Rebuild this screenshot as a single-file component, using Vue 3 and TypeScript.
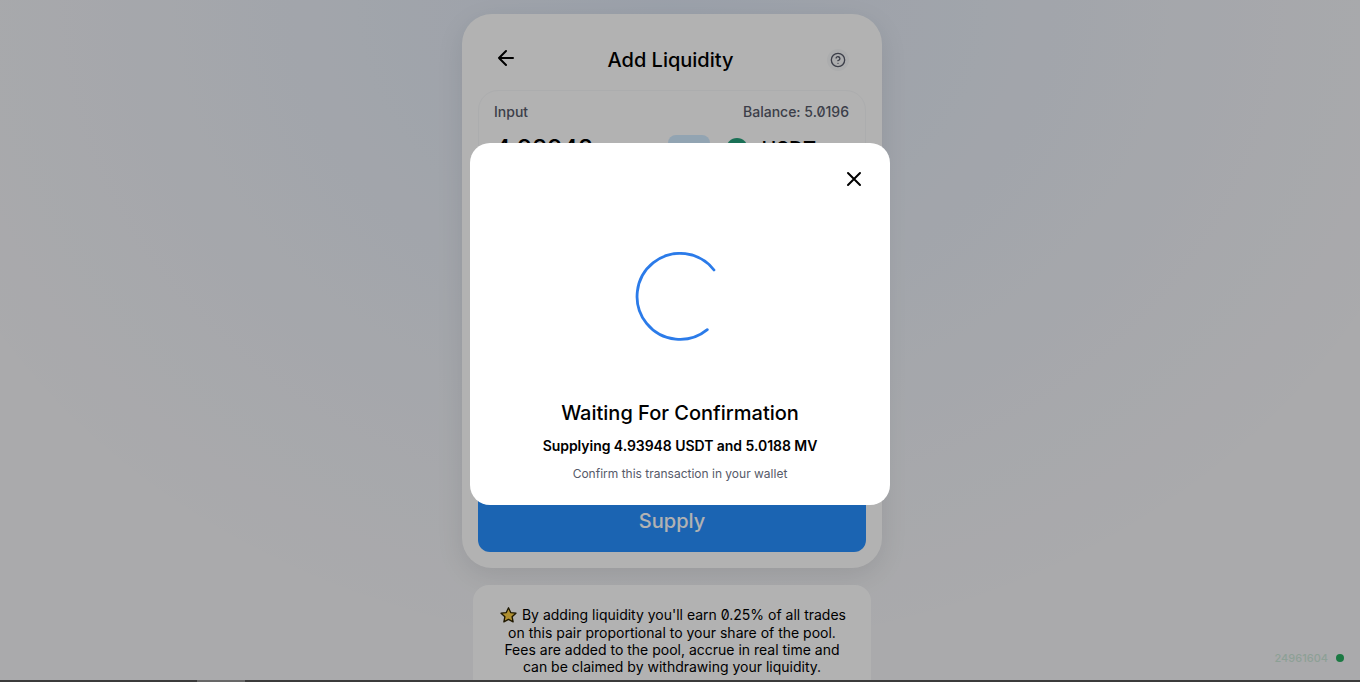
<template>
  <div class="page">
    <main class="column">
      <section class="card">
        <header class="card-head">
          <button class="icon-btn back" aria-label="Back">
            <svg width="24" height="24" viewBox="0 0 24 24" fill="none" stroke="currentColor" stroke-width="2" stroke-linecap="round" stroke-linejoin="round">
              <path d="M19 12H5M12 19l-7-7 7-7" />
            </svg>
          </button>
          <h1 class="card-title">Add Liquidity</h1>
          <button class="help" aria-label="Help">
            <svg width="16" height="16" viewBox="0 0 24 24" fill="none" stroke="currentColor" stroke-width="2" stroke-linecap="round" stroke-linejoin="round">
              <circle cx="12" cy="12" r="10" />
              <path d="M9.1 9a3 3 0 0 1 5.8 1c0 2-3 3-3 3M12 17h.01" />
            </svg>
          </button>
        </header>

        <div class="input-panel">
          <div class="input-labels">
            <span>Input</span>
            <span>Balance: 5.0196</span>
          </div>
          <div class="input-row">
            <span class="amount">4.93948</span>
            <button class="max">MAX</button>
            <span class="coin"></span>
            <span class="symbol">USDT</span>
          </div>
        </div>

        <button class="supply">Supply</button>
      </section>

      <aside class="notice">
        <p>
          <span class="star">
            <svg width="17" height="16" viewBox="1 1.5 22 21">
              <path d="M12 2.5l2.9 6.3 6.9.8-5.1 4.7 1.4 6.8-6.1-3.4-6.1 3.4 1.4-6.8-5.1-4.7 6.9-.8z" fill="#fdcf45" stroke="#2b2100" stroke-width="1.7" stroke-linejoin="round" />
            </svg>
          </span>
          By adding liquidity you'll earn 0.25% of all trades on this pair proportional to your share of the pool. Fees are added to the pool, accrue in real time and can be claimed by withdrawing your liquidity.
        </p>
      </aside>
    </main>

    <div class="status">
      <span class="block-no">{{ blockNumber }}</span>
      <span class="dot"></span>
    </div>

    <div class="overlay">
      <div class="modal">
        <button class="close" aria-label="Close">
          <svg width="24" height="24" viewBox="0 0 24 24" fill="none" stroke="currentColor" stroke-width="2" stroke-linecap="round" stroke-linejoin="round">
            <path d="M18 6L6 18M6 6l12 12" />
          </svg>
        </button>
        <div class="spinner">
          <svg width="90" height="90" viewBox="0 0 90 90" fill="none">
            <path d="M79 18A43 43 0 1 0 72.3 77.7" stroke="#2b7be9" stroke-width="2.8" stroke-linecap="round" />
          </svg>
        </div>
        <h2 class="modal-title">Waiting For Confirmation</h2>
        <p class="modal-sub">Supplying 4.93948 USDT and 5.0188 MV</p>
        <p class="modal-hint">Confirm this transaction in your wallet</p>
      </div>
    </div>

    <div class="scrollbar"><span class="thumb"></span></div>
  </div>
</template>

<script setup lang="ts">
const blockNumber = 24961604
</script>

<style>
html, body { margin: 0; height: 100%; overflow: hidden; }
</style>

<style scoped>
.page {
  position: relative;
  height: 682px;
  overflow: hidden;
  font-family: Inter, "Liberation Sans", sans-serif;
  font-feature-settings: "zero" 1;
  color: #000;
  background:
    radial-gradient(ellipse 800px 660px at 672px 0, rgba(33, 114, 229, 0.1) 0%, rgba(33, 114, 229, 0) 100%),
    #f4f4f6;
}

.column {
  display: flex;
  flex-direction: column;
  align-items: center;
  padding: 14px 16px 0 0;
}

.card {
  width: 420px;
  height: 554px;
  box-sizing: border-box;
  padding: 0 16px 16px;
  display: flex;
  flex-direction: column;
  background: #fff;
  border-radius: 30px;
  box-shadow: 0 8px 28px rgba(0, 0, 0, 0.09);
}

.card-head {
  height: 76px;
  display: flex;
  align-items: center;
  justify-content: space-between;
  padding: 16px 17px 0 16px;
  box-sizing: border-box;
}

.icon-btn, .help {
  border: none;
  background: none;
  padding: 0;
  display: flex;
  color: #000;
}

.back { margin-top: -4px; }

.card-title {
  margin: 0 4px 0 0;
  font-size: 20px;
  font-weight: 500;
}

.help {
  width: 22px;
  height: 22px;
  align-items: center;
  justify-content: center;
  border-radius: 50%;
  background: #f7f8fa;
  color: #565a69;
}

.input-panel {
  height: 120px;
  box-sizing: border-box;
  padding: 12px 16px 12px 15px;
  border: 1px solid #f7f8fa;
  border-radius: 20px;
}

.input-labels {
  display: flex;
  justify-content: space-between;
  font-size: 14px;
  font-weight: 500;
  color: #565a69;
}

.input-row {
  display: flex;
  align-items: center;
  margin-top: 14px;
}

.amount {
  font-size: 24px;
  font-weight: 500;
  margin: 0 auto 0 1px;
}

.max {
  width: 42px;
  height: 28px;
  border: none;
  border-radius: 8px;
  background: #d2ebff;
  color: #2172e5;
  font: inherit;
  font-size: 12px;
  margin-right: 16px;
}

.coin {
  width: 22px;
  height: 22px;
  border-radius: 50%;
  background: #26a17b;
  margin-right: 13px;
}

.symbol {
  font-size: 20px;
  font-weight: 500;
  margin-right: 33px;
}

.supply {
  margin-top: auto;
  height: 62px;
  border: none;
  border-radius: 12px;
  background: #2890ff;
  color: #fff;
  font: inherit;
  font-size: 20px;
  font-weight: 500;
}

.notice {
  margin-top: 17px;
  width: 398px;
  box-sizing: border-box;
  padding: 21.3px 24px 20px;
  background: #fff;
  border-radius: 16px;
}

.notice p {
  margin: 0;
  font-size: 14px;
  line-height: 17.3px;
  text-align: center;
}

.star {
  display: inline-block;
  height: 14px;
  line-height: 14px;
  vertical-align: -2px;
  margin: 0 1px 0 2px;
}

.star svg { display: block; margin-top: -1px; }

.status {
  position: absolute;
  right: 16px;
  bottom: 17px;
  display: flex;
  align-items: center;
  gap: 8px;
  font-size: 11px;
  font-weight: 500;
}

.block-no { color: #27ae60; opacity: 0.2; font-feature-settings: "zero" 0; }

.dot {
  width: 8px;
  height: 8px;
  border-radius: 50%;
  background: #27ae60;
}

.overlay {
  position: absolute;
  inset: 0;
  display: flex;
  justify-content: center;
  background: rgba(0, 0, 0, 0.3);
}

.modal {
  position: relative;
  width: 420px;
  height: 362px;
  margin-top: 143px;
  box-sizing: border-box;
  background: #fff;
  border-radius: 20px;
  display: flex;
  flex-direction: column;
  align-items: center;
  font-feature-settings: normal;
}

.close {
  position: absolute;
  top: 24px;
  right: 24px;
  border: none;
  background: none;
  padding: 0;
  display: flex;
  color: #000;
}

.spinner {
  margin-top: 109px;
  height: 90px;
  display: flex;
}

.modal-title {
  margin: 59px 0 0;
  font-size: 20px;
  line-height: 24px;
  font-weight: 500;
}

.modal-sub {
  margin: 12px 0 0;
  font-size: 14px;
  line-height: 17px;
  font-weight: 600;
  letter-spacing: -0.05px;
}

.modal-hint {
  margin: 12px 0 0;
  font-size: 12px;
  line-height: 15px;
  color: #565a69;
}

.scrollbar {
  position: absolute;
  left: 0;
  right: 0;
  bottom: 0;
  height: 2px;
  background: #3b3b3b;
}

.thumb {
  display: block;
  width: 48px;
  height: 2px;
  margin-left: 197px;
  background: #686868;
}
</style>
